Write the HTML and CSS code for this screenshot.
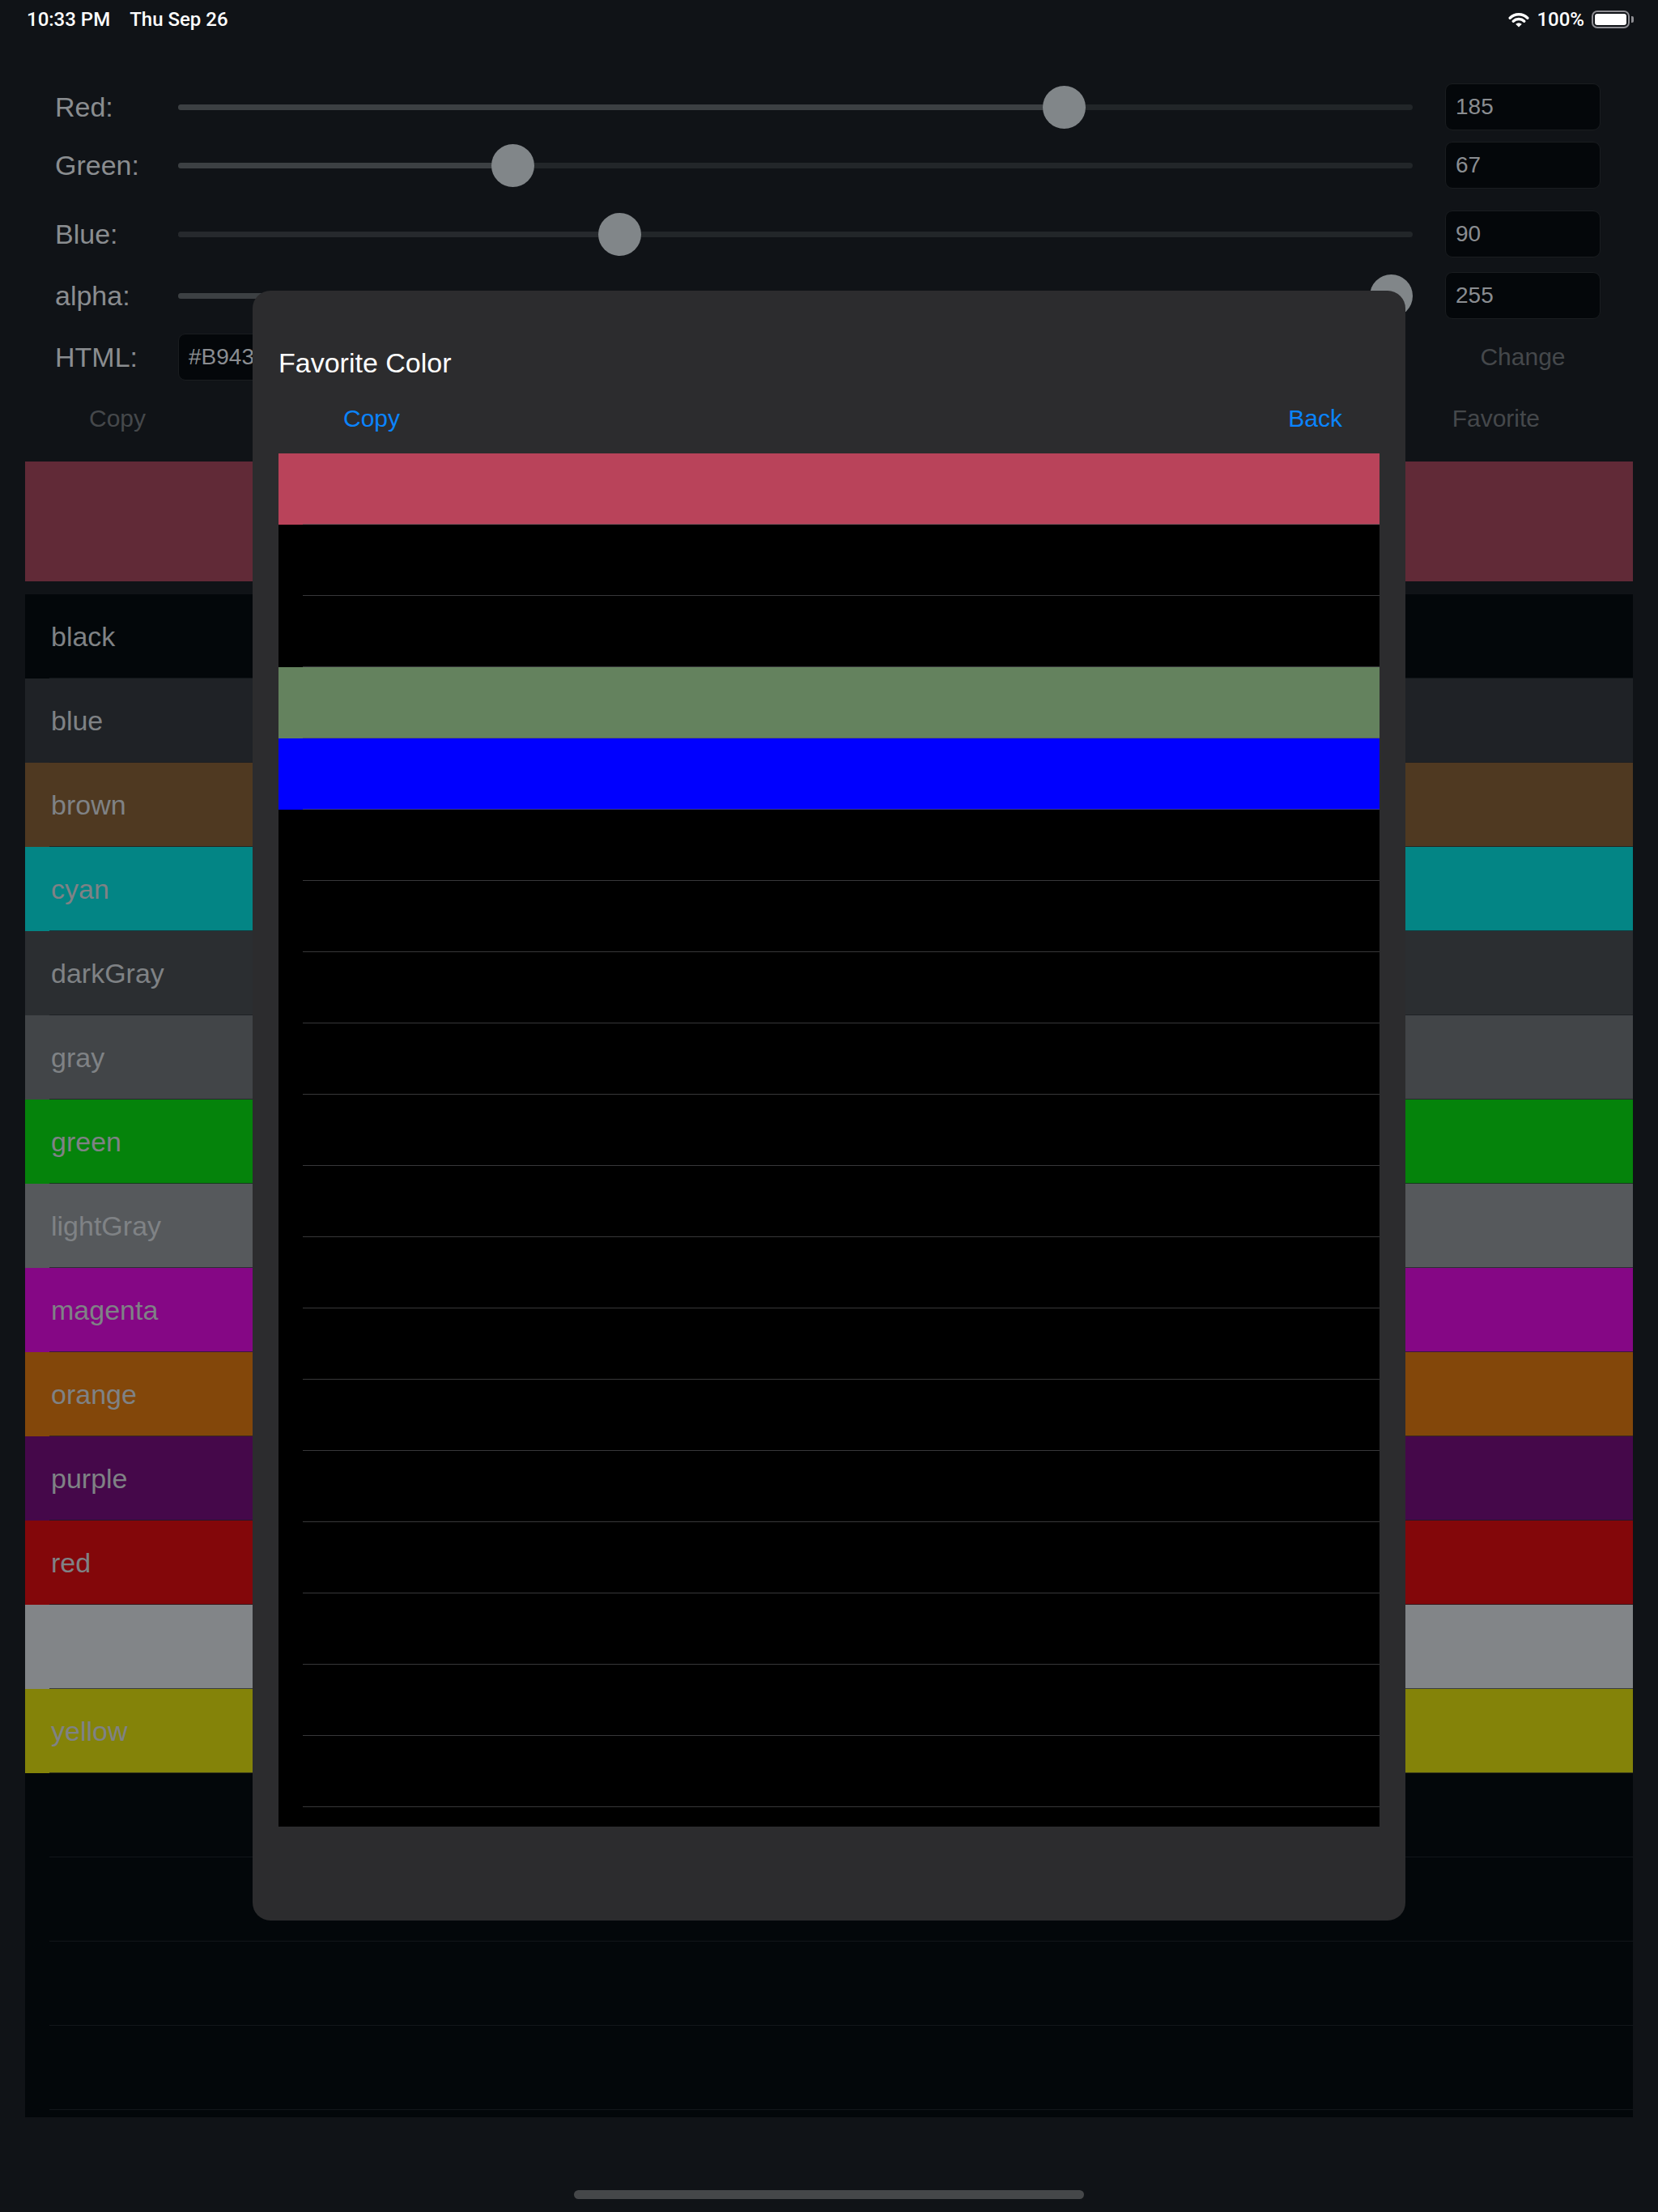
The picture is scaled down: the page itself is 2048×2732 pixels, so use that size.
FILE: index.html
```html
<!DOCTYPE html>
<html lang="en">
<head>
    <meta charset="UTF-8">
    <meta name="viewport" content="width=device-width, initial-scale=1.0">
    <title>Color Picker - Favorite Color</title>
    <link rel="stylesheet" href="styles.css">
</head>
<body>
    <div class="screen">
        <div class="status-bar">
            <div class="status-left">
                <span>10:33 PM</span>
                <span>Thu Sep 26</span>
            </div>
            <div class="status-right">
                <svg class="wifi" width="26" height="20" viewBox="0 0 26 20">
                    <path d="M2.2 8.2 A15.5 15.5 0 0 1 23.8 8.2" fill="none" stroke="#fff" stroke-width="3.4" stroke-linecap="round"/>
                    <path d="M6.2 12.2 A10 10 0 0 1 19.8 12.2" fill="none" stroke="#fff" stroke-width="3.4" stroke-linecap="round"/>
                    <path d="M13 19.5 L9.2 15.7 A5.4 5.4 0 0 1 16.8 15.7 Z" fill="#fff"/>
                </svg>
                <span>100%</span>
                <div class="battery"><div class="battery-level"></div></div>
            </div>
        </div>

        <div class="controls">
            <div class="slider-row">
                <span class="row-label">Red:</span>
                <div class="slider" style="--p: 0.7255;">
                    <div class="slider-fill"></div>
                    <div class="slider-thumb"></div>
                </div>
                <div class="value-field">185</div>
            </div>
            <div class="slider-row row-tight">
                <span class="row-label">Green:</span>
                <div class="slider" style="--p: 0.2627;">
                    <div class="slider-fill"></div>
                    <div class="slider-thumb"></div>
                </div>
                <div class="value-field">67</div>
            </div>
            <div class="slider-row row-loose">
                <span class="row-label">Blue:</span>
                <div class="slider slider-blue" style="--p: 0.3529;">
                    <div class="slider-fill"></div>
                    <div class="slider-thumb"></div>
                </div>
                <div class="value-field">90</div>
            </div>
            <div class="slider-row">
                <span class="row-label">alpha:</span>
                <div class="slider" style="--p: 1;">
                    <div class="slider-fill"></div>
                    <div class="slider-thumb"></div>
                </div>
                <div class="value-field">255</div>
            </div>
            <div class="slider-row">
                <span class="row-label">HTML:</span>
                <div class="value-field html-field">#B9435A</div>
                <button class="text-button">Change</button>
            </div>
            <div class="actions">
                <button class="text-button">Copy</button>
                <button class="text-button">Favorite</button>
            </div>
        </div>

        <div class="preview"></div>

        <div class="color-list">
            <div class="color-row row-black">black</div>
            <div class="color-row row-blue">blue</div>
            <div class="color-row row-brown">brown</div>
            <div class="color-row row-cyan">cyan</div>
            <div class="color-row row-darkgray">darkGray</div>
            <div class="color-row row-gray">gray</div>
            <div class="color-row row-green">green</div>
            <div class="color-row row-lightgray">lightGray</div>
            <div class="color-row row-magenta">magenta</div>
            <div class="color-row row-orange">orange</div>
            <div class="color-row row-purple">purple</div>
            <div class="color-row row-red">red</div>
            <div class="color-row row-white">white</div>
            <div class="color-row row-yellow">yellow</div>
            <div class="color-row"></div>
            <div class="color-row"></div>
            <div class="color-row"></div>
            <div class="color-row"></div>
            <div class="color-row"></div>
        </div>

        <div class="home-indicator"></div>

        <!-- favorites sheet -->
        <div class="modal">
            <h2 class="modal-title">Favorite Color</h2>
            <div class="modal-actions">
                <button class="link-button">Copy</button>
                <button class="link-button">Back</button>
            </div>
            <div class="fav-list">
                <div class="fav-row fav-pink"></div>
                <div class="fav-row"></div>
                <div class="fav-row"></div>
                <div class="fav-row fav-sage"></div>
                <div class="fav-row fav-blue"></div>
                <div class="fav-row"></div>
                <div class="fav-row"></div>
                <div class="fav-row"></div>
                <div class="fav-row"></div>
                <div class="fav-row"></div>
                <div class="fav-row"></div>
                <div class="fav-row"></div>
                <div class="fav-row"></div>
                <div class="fav-row"></div>
                <div class="fav-row"></div>
                <div class="fav-row"></div>
                <div class="fav-row"></div>
                <div class="fav-row"></div>
                <div class="fav-row"></div>
                <div class="fav-row"></div>
            </div>
        </div>
    </div>
</body>
</html>
```

FILE: styles.css
```css
* {
    margin: 0;
    padding: 0;
    box-sizing: border-box;
}

body {
    background: #101317;
    font-family: "Liberation Sans", Arial, sans-serif;
}

.screen {
    position: relative;
    width: 2048px;
    height: 2732px;
    overflow: hidden;
}

/* status bar */
.status-bar {
    height: 48px;
    display: flex;
    justify-content: space-between;
    align-items: center;
    padding: 0 35px 0 33px;
    color: #fff;
    font-family: Roboto, "Liberation Sans", sans-serif;
    font-weight: 500;
    font-size: 24px;
}

.status-left {
    display: flex;
    gap: 24px;
}

.status-right {
    display: flex;
    align-items: center;
    gap: 9px;
}

.battery {
    position: relative;
    width: 47px;
    height: 22px;
    border: 2px solid #8e8e93;
    border-radius: 7px;
    padding: 2px;
}

.battery-level {
    width: 100%;
    height: 100%;
    background: #fff;
    border-radius: 3px;
}

.battery::after {
    content: "";
    position: absolute;
    right: -7px;
    top: 5px;
    width: 3px;
    height: 8px;
    background: #8e8e93;
    border-radius: 0 2px 2px 0;
}

/* sliders */
.controls {
    padding: 55px 71px 0 68px;
    display: flex;
    flex-direction: column;
    gap: 18px;
}

.slider-row {
    display: grid;
    grid-template-columns: 112px 1fr 192px;
    column-gap: 40px;
    align-items: center;
    height: 58px;
}

.row-tight {
    margin-top: -4px;
}

.row-loose {
    margin-top: 9px;
}

.row-label {
    font-size: 34px;
    color: #8a8d90;
}

.slider {
    position: relative;
    height: 53px;
}

.slider::before {
    content: "";
    position: absolute;
    left: 0;
    right: 0;
    top: 23px;
    height: 7px;
    border-radius: 4px;
    background: #222629;
}

.slider-fill {
    position: absolute;
    left: 0;
    top: 23px;
    height: 7px;
    border-radius: 4px;
    width: calc(var(--p) * (100% - 53px) + 26px);
    background: #3c4043;
}

.slider-blue .slider-fill {
    background: #26292d;
}

.slider-thumb {
    position: absolute;
    top: 0;
    left: calc(var(--p) * (100% - 53px));
    width: 53px;
    height: 53px;
    border-radius: 50%;
    background: #818689;
}

.value-field {
    height: 58px;
    display: flex;
    align-items: center;
    padding-left: 12px;
    background: #04070a;
    border: 1px solid #1a1d20;
    border-radius: 9px;
    font-size: 28px;
    color: #8a8d91;
}

.html-field {
    margin-right: 60px;
}

.text-button {
    background: none;
    border: none;
    font-family: inherit;
    font-size: 30px;
    color: #45484b;
}

.actions {
    height: 58px;
    display: flex;
    justify-content: space-between;
    align-items: center;
    padding: 0 75px 0 42px;
}

/* preview + list */
.preview {
    margin: 24px 31px 0;
    height: 148px;
    background: #612a37;
}

.color-list {
    margin: 16px 31px 0;
    height: 1881px;
    background: #03070a;
    overflow: hidden;
}

.color-row {
    position: relative;
    height: 104px;
    display: flex;
    align-items: center;
    padding-left: 32px;
    font-size: 34px;
    color: #7f8285;
}

.color-row::after {
    content: "";
    position: absolute;
    left: 30px;
    right: 0;
    bottom: 0;
    height: 1px;
    background: rgba(26, 29, 33, 0.7);
}

.row-black { background: #03070a; }
.row-blue { background: #1f2226; }
.row-brown { background: #4f3921; }
.row-cyan { background: #038585; }
.row-darkgray { background: #2b2e31; }
.row-gray { background: #424548; }
.row-green { background: #05830b; }
.row-lightgray { background: #56595c; }
.row-magenta { background: #850785; }
.row-orange { background: #83470a; }
.row-purple { background: #45084a; }
.row-red { background: #83070a; }
.row-white { background: #828588; color: #828588; }
.row-yellow { background: #848309; }

.home-indicator {
    width: 630px;
    height: 11px;
    margin: 90px auto 0;
    border-radius: 6px;
    background: #454749;
}

/* favorites sheet */
.modal {
    position: absolute;
    left: 312px;
    top: 359px;
    width: 1424px;
    height: 2013px;
    padding: 69px 32px 0;
    background: #2c2c2e;
    border-radius: 22px;
}

.modal-title {
    font-size: 34px;
    line-height: 40px;
    font-weight: normal;
    color: #fff;
}

.modal-actions {
    display: flex;
    justify-content: space-between;
    margin-top: 31px;
    padding: 0 46px 0 80px;
}

.link-button {
    background: none;
    border: none;
    font-family: inherit;
    font-size: 30px;
    line-height: 36px;
    color: #0a84ff;
}

.fav-list {
    margin-top: 25px;
    height: 1696px;
    background: #000;
    overflow: hidden;
}

.fav-row {
    position: relative;
    height: 88px;
}

.fav-row::after {
    content: "";
    position: absolute;
    left: 30px;
    right: 0;
    bottom: 0;
    height: 1px;
    background: rgba(84, 84, 88, 0.65);
}

.fav-pink { background: #b9435a; }
.fav-sage { background: #64825e; }
.fav-blue { background: #0000ff; }
```
